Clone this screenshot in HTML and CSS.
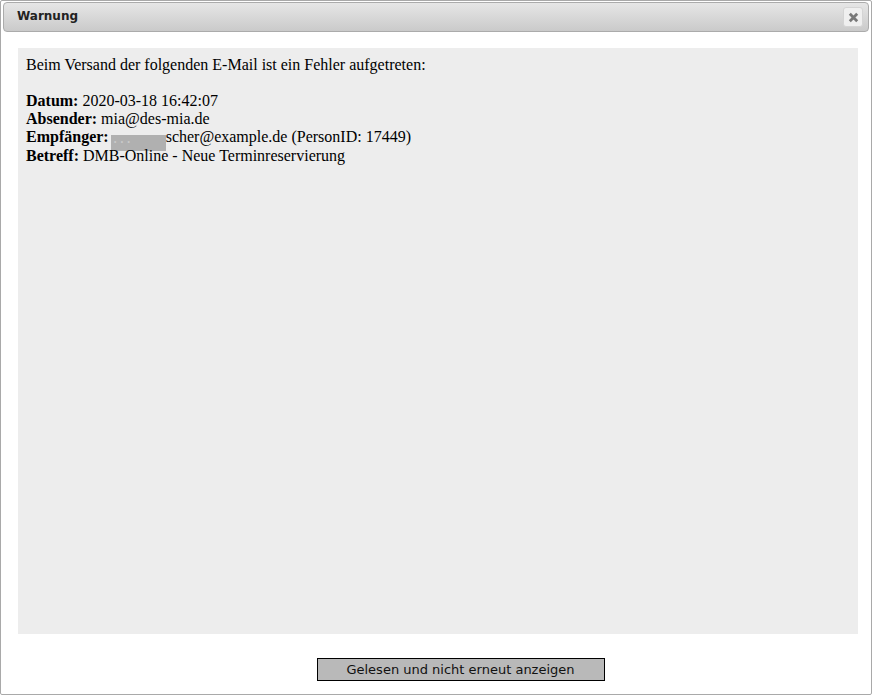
FILE: index.html
```html
<!DOCTYPE html>
<html lang="de">
<head>
<meta charset="utf-8">
<title>Warnung</title>
<link rel="stylesheet" href="styles.css">
</head>
<body>
<div class="dialog">
  <div class="titlebar">
    <span class="title">Warnung</span>
    <button class="close" aria-label="Schließen">
      <svg width="11" height="11" viewBox="0 0 11 11"><path d="M1.8 1.8 L9.2 9.2 M9.2 1.8 L1.8 9.2" stroke="#787878" stroke-width="2.8" stroke-linecap="butt"/></svg>
    </button>
  </div>
  <div class="content">
    <div class="message">
      Beim Versand der folgenden E-Mail ist ein Fehler aufgetreten:<br><br>
      <b>Datum:</b> 2020-03-18 16:42:07<br>
      <b>Absender:</b> mia@des-mia.de<br>
      <b>Empfänger:</b> <span class="blur">• • •</span>scher@example.de (PersonID: 17449)<br>
      <b>Betreff:</b> DMB-Online - Neue Terminreservierung
    </div>
  </div>
  <div class="buttons">
    <button class="ack">Gelesen und nicht erneut anzeigen</button>
  </div>
</div>
</body>
</html>
```
FILE: styles.css
```css
html, body {
  margin: 0;
  padding: 0;
  background: #fff;
}
.dialog {
  box-sizing: border-box;
  width: 872px;
  height: 695px;
  border: 1px solid #a9a9a9;
  border-radius: 2px;
  padding: 1px 2px 0 2px;
  display: flex;
  flex-direction: column;
}
.titlebar {
  box-sizing: border-box;
  height: 30px;
  border: 1px solid #ababab;
  border-radius: 4px;
  background: linear-gradient(#e6e6e6, #cacaca);
  display: flex;
  align-items: center;
  justify-content: space-between;
  padding: 0 5px 3px 13px;
}
.title {
  font-family: "DejaVu Sans", sans-serif;
  font-weight: bold;
  font-size: 12px;
  color: #222;
}
.close {
  box-sizing: border-box;
  width: 20px;
  height: 20px;
  padding: 0;
  margin: 3px 0 0 0;
  border: 1px solid #d4d4d4;
  border-radius: 3px;
  background: #efefef;
  display: flex;
  align-items: center;
  justify-content: center;
}
.content {
  margin: 16px 11px 0 15px;
  height: 586px;
  background: #ededed;
  box-sizing: border-box;
  padding: 8px;
}
.message {
  font-family: "Liberation Serif", serif;
  font-size: 16px;
  line-height: 18px;
  color: #000;
}
.blur {
  display: inline-block;
  width: 55px;
  height: 16px;
  margin: -4px 0 -4px -2px;
  vertical-align: -3px;
  background: #b0b0b0;
  color: #cacaca;
  font-size: 8px;
  line-height: 16px;
  padding-left: 3px;
  box-sizing: border-box;
  letter-spacing: 1px;
}
.buttons {
  display: flex;
  justify-content: center;
  padding-top: 24px;
  padding-left: 49px;
}
.ack {
  box-sizing: border-box;
  width: 288px;
  height: 23px;
  margin: 0;
  padding: 0;
  border: 1px solid #000;
  background: #b9b9b9;
  font-family: "DejaVu Sans", sans-serif;
  font-size: 13px;
  color: #111;
}
```
